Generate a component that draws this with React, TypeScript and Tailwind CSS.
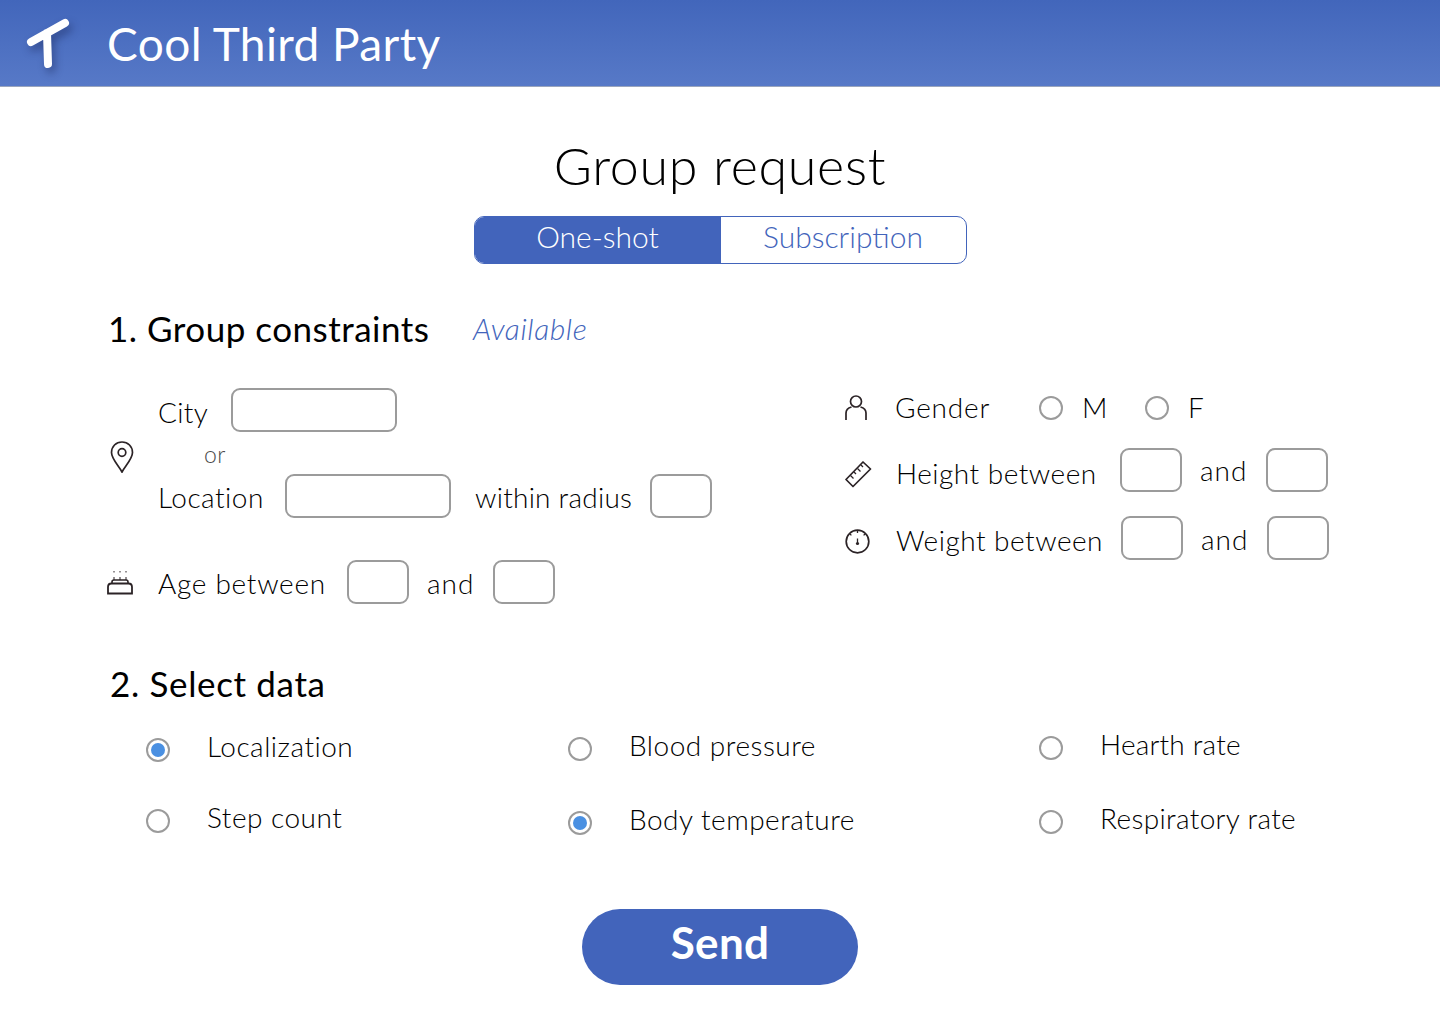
import React from "react";

const Box = ({ className = "" }: { className?: string }) => (
  <div className={`h-[44px] rounded-[9px] border-2 border-[#9b9b9b] bg-white shrink-0 ${className}`} />
);

const Radio = ({ checked = false }: { checked?: boolean }) => (
  <span className="flex size-6 shrink-0 items-center justify-center rounded-full border-2 border-[#9b9b9b] bg-white">
    {checked && <span className="size-[14px] rounded-full bg-[#4a90e2]" />}
  </span>
);

const DataOption = ({ label, checked, tracking = "tracking-[0.5px]" }: { label: string; checked?: boolean; tracking?: string }) => (
  <div className={`flex h-[30px] items-center gap-[37px] text-[28px] font-light leading-none text-black ${tracking}`}>
    <Radio checked={checked} />
    <span className="pb-[8px]">{label}</span>
  </div>
);

const PinIcon = () => (
  <svg width="24" height="32" viewBox="0 0 24 32" fill="none" stroke="#2b2326" strokeWidth="1.7">
    <path d="M12 31 C9 25 1.5 18 1.5 11.5 C1.5 5.5 6 1 12 1 C18 1 22.5 5.5 22.5 11.5 C22.5 18 15 25 12 31 Z" />
    <circle cx="12" cy="11.5" r="3.8" />
  </svg>
);

const CakeIcon = () => (
  <svg width="26" height="25" viewBox="0 0 26 25" fill="none" stroke="#2b2326" strokeWidth="1.8">
    <path d="M1 23.5 V17 Q1 13.5 4.5 13.5 H21.5 Q25 13.5 25 17 V23.5 Z" />
    <path d="M5 13.5 V12 Q5 10 7 10 H19 Q21 10 21 12 V13.5" strokeWidth="1.6" />
    <path d="M7 1 V2.5 M13 1 V2.5 M19 1 V2.5 M7 7 V10 M13 7 V10 M19 7 V10" strokeWidth="1" />
  </svg>
);

const UserIcon = () => (
  <svg width="22" height="25" viewBox="0 0 22 25" fill="none" stroke="#2b2326" strokeWidth="1.7">
    <circle cx="11" cy="6.5" r="5.5" />
    <path d="M1 25 V18 Q1 13.5 6.5 12 M21 25 V18 Q21 13.5 15.5 12" />
  </svg>
);

const RulerIcon = () => (
  <svg width="27" height="27" viewBox="0 0 27 27" fill="none" stroke="#2b2326" strokeWidth="1.7" strokeLinejoin="round">
    <path d="M18 1 L25.5 8 L8 25.5 L1 18.5 Z" />
    <path d="M5.5 14.5 L8.5 17.5 M9 11 L11 13 M12.5 7.5 L15.5 10.5 M16 4 L18 6" strokeWidth="1.3" />
  </svg>
);

const GaugeIcon = () => (
  <svg width="25" height="25" viewBox="0 0 25 25" fill="none" stroke="#2b2326" strokeWidth="1.7">
    <circle cx="12.5" cy="12.5" r="11.3" />
    <path d="M12.5 1.5 V4 M4.7 4.7 L6.4 6.4 M20.3 4.7 L18.6 6.4" strokeWidth="1.3" />
    <path d="M12.5 9.5 V14" strokeWidth="1.3" />
    <circle cx="12.5" cy="14.5" r="1.6" fill="#2b2326" stroke="none" />
  </svg>
);

export default function App() {
  return (
    <div className="min-h-[1024px] bg-white font-['Lato','Liberation_Sans',sans-serif] text-black">
      {/* Header */}
      <header className="flex h-[87px] items-center border-b border-[#9aa5bd] bg-gradient-to-b from-[#4266bb] to-[#5779c7] pl-[26px]">
        <svg width="46" height="54" viewBox="0 0 46 54" fill="none" className="mt-[4px] drop-shadow-[3px_5px_4px_rgba(20,30,80,0.45)]">
          <path d="M5 24 L39 5 M21 15 L22 46" stroke="white" strokeWidth="8" strokeLinecap="round" />
        </svg>
        <h1 className="ml-[35px] pt-[2px] text-[46px] font-normal leading-none tracking-[0.4px] text-white">Cool Third Party</h1>
      </header>

      {/* Title + toggle */}
      <h2 className="mt-[49px] text-center text-[52px] font-light leading-[58px] tracking-[0.7px]">Group request</h2>
      <div className="mx-auto mt-[22px] flex h-[48px] w-[493px] overflow-hidden rounded-[10px] border border-[#4264bb] text-[30px] font-light">
        <div className="flex w-[246px] items-start justify-center bg-[#4264bb] leading-[38px] text-white">One-shot</div>
        <div className="flex flex-1 items-start justify-center leading-[38px] text-[#4264bb]">Subscription</div>
      </div>

      {/* 1. Group constraints */}
      <div className="ml-[108px] mt-[42px] flex h-[44px] items-center">
        <h3 className="w-[365px] text-[35px] leading-none tracking-[0.5px]">1. Group constraints</h3>
        <span className="text-[30px] font-light italic leading-none tracking-[0.6px] text-[#4264bb]">Available</span>
      </div>

      <div className="mt-[38px] flex">
        {/* Left column */}
        <div className="ml-[107px] w-[738px] text-[28px] font-light leading-none tracking-[0.5px]">
          <div className="flex">
            <div className="flex w-[51px] items-center pl-[3px] pt-[7px]">
              <PinIcon />
            </div>
            <div>
              <div className="flex h-[44px] items-center">
                <span className="mt-[4px] w-[73px] tracking-[0.3px]">City</span>
                <Box className="w-[166px]" />
              </div>
              <div className="ml-[46px] mt-[12px] h-[30px] text-[23px] leading-[20px] text-[#4a4a4a]">or</div>
              <div className="flex h-[44px] items-center">
                <span className="mt-[2px] w-[127px]">Location</span>
                <Box className="w-[166px]" />
                <span className="ml-[24px] mt-[2px] w-[175px] tracking-[0.25px]">within radius</span>
                <Box className="w-[62px]" />
              </div>
            </div>
          </div>
          <div className="mt-[42px] flex h-[44px] items-center">
            <div className="w-[51px]">
              <CakeIcon />
            </div>
            <span className="mt-[2px] w-[189px] tracking-[0.7px]">Age between</span>
            <Box className="w-[62px]" />
            <span className="ml-[18px] mt-[2px] w-[66px] tracking-[1px]">and</span>
            <Box className="w-[62px]" />
          </div>
        </div>

        {/* Right column */}
        <div className="text-[28px] font-light leading-none tracking-[0.5px]">
          <div className="flex h-[40px] items-center">
            <div className="w-[50px] pb-[2px]">
              <UserIcon />
            </div>
            <span className="w-[144px] pb-[2px] tracking-[0.8px]">Gender</span>
            <Radio />
            <span className="ml-[19px] w-[63px] pb-[2px]">M</span>
            <Radio />
            <span className="ml-[19px] pb-[2px]">F</span>
          </div>
          <div className="mt-[20px] flex h-[44px] items-center">
            <div className="mt-[8px] w-[51px]">
              <RulerIcon />
            </div>
            <span className="mt-[6px] w-[224px]">Height between</span>
            <Box className="w-[62px]" />
            <span className="ml-[18px] w-[66px] tracking-[1px]">and</span>
            <Box className="w-[62px]" />
          </div>
          <div className="mt-[24px] flex h-[44px] items-center">
            <div className="mt-[6px] w-[51px]">
              <GaugeIcon />
            </div>
            <span className="mt-[4px] w-[225px]">Weight between</span>
            <Box className="w-[62px]" />
            <span className="ml-[18px] mt-[2px] w-[66px] tracking-[1px]">and</span>
            <Box className="w-[62px]" />
          </div>
        </div>
      </div>

      {/* 2. Select data */}
      <h3 className="ml-[110px] mt-[59px] h-[40px] text-[35px] leading-[40px] tracking-[0.65px]">2. Select data</h3>

      <div className="ml-[146px] mt-[31px] flex">
        <div className="flex w-[422px] flex-col gap-[41px] pt-[1px]">
          <DataOption label="Localization" checked />
          <DataOption label="Step count" />
        </div>
        <div className="flex w-[471px] flex-col gap-[44px]">
          <DataOption label="Blood pressure" />
          <DataOption label="Body temperature" checked />
        </div>
        <div className="-mt-[1px] flex flex-col gap-[44px]">
          <DataOption label="Hearth rate" tracking="tracking-[0.2px]" />
          <DataOption label="Respiratory rate" tracking="tracking-[0.35px]" />
        </div>
      </div>

      {/* Send */}
      <div className="mt-[71px] flex justify-center">
        <button className="h-[76px] w-[276px] rounded-full bg-[#4264bb] pb-[12px] text-[44px] font-bold tracking-[0.3px] text-white">Send</button>
      </div>
    </div>
  );
}
